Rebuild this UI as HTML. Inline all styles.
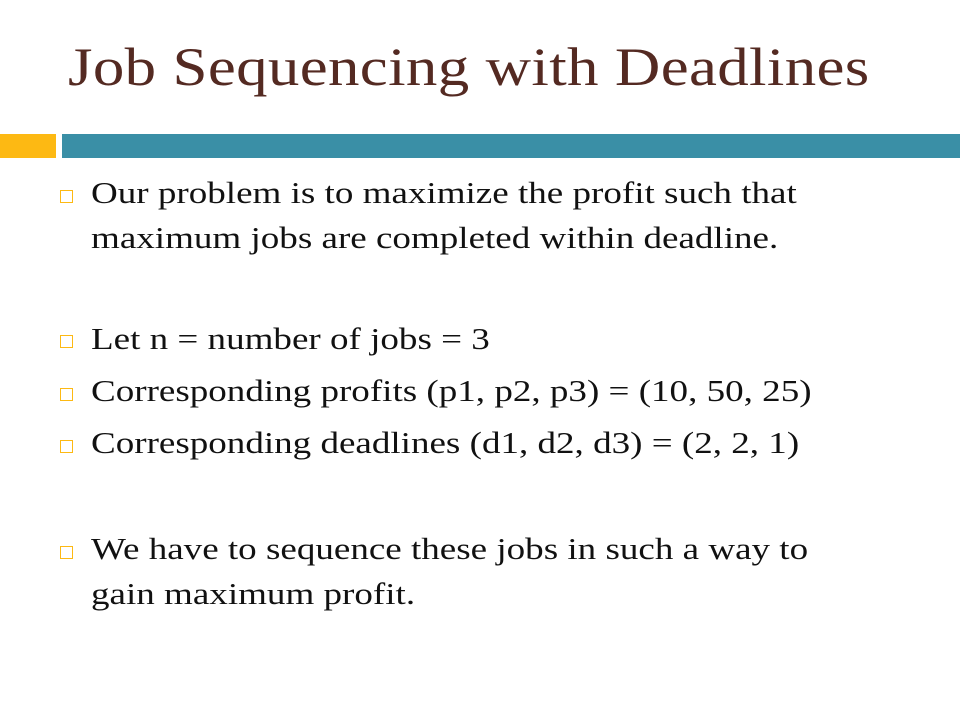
<!DOCTYPE html>
<html><head><style>
body{margin:0;width:960px;height:720px;background:#fff;position:relative;overflow:hidden;font-family:"Liberation Serif",serif;}
.t{position:absolute;left:68px;top:36px;font-size:54px;color:#542a22;white-space:nowrap;letter-spacing:0.3px;transform:scaleX(1.165);transform-origin:left top}
.b1{position:absolute;left:0;top:134px;width:56px;height:24px;background:#fdb913}
.b2{position:absolute;left:62px;top:134px;width:898px;height:24px;background:#3a8fa6}
.p{position:absolute;left:91px;font-size:31px;color:#111;white-space:nowrap;line-height:45px;transform:scaleX(1.195);transform-origin:left top}
.s{position:absolute;left:60px;width:11px;height:11px;border:1.5px solid #fdb913}
</style></head><body>
<div class="t">Job Sequencing with Deadlines</div>
<div class="b1"></div><div class="b2"></div>
<div class="s" style="top:190px"></div>
<div class="p" style="top:170px">Our problem is to maximize the profit such that<br>maximum jobs are completed within deadline.</div>
<div class="s" style="top:335px"></div>
<div class="p" style="top:316px">Let n = number of jobs = 3</div>
<div class="s" style="top:388px"></div>
<div class="p" style="top:368px">Corresponding profits (p1, p2, p3) = (10, 50, 25)</div>
<div class="s" style="top:440px"></div>
<div class="p" style="top:420px">Corresponding deadlines (d1, d2, d3) = (2, 2, 1)</div>
<div class="s" style="top:546px"></div>
<div class="p" style="top:526px">We have to sequence these jobs in such a way to<br>gain maximum profit.</div>
</body></html>
